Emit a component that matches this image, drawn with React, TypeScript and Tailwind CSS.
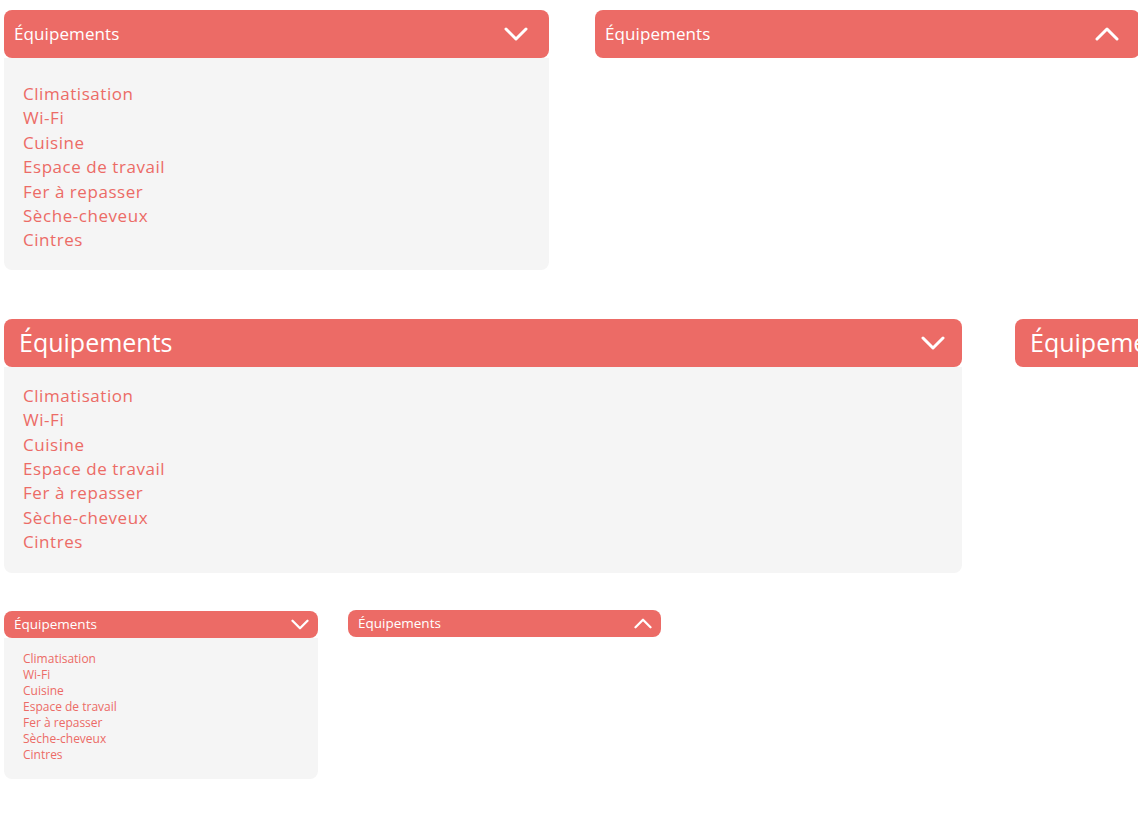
const items = [
  "Climatisation",
  "Wi-Fi",
  "Cuisine",
  "Espace de travail",
  "Fer à repasser",
  "Sèche-cheveux",
  "Cintres",
];

type Size = "md" | "lg" | "sm";

const Chevron = ({ up, small }: { up?: boolean; small?: boolean }) => (
  <svg
    width={small ? 18 : 24}
    height={small ? 11 : 14}
    viewBox="0 0 24 14"
    fill="none"
    stroke="white"
    strokeWidth={3}
    strokeLinecap="round"
    strokeLinejoin="round"
  >
    {up ? <polyline points="2,12 12,2 22,12" /> : <polyline points="2,2 12,12 22,2" />}
  </svg>
);

const Collapse = ({
  size,
  open,
  width,
}: {
  size: Size;
  open: boolean;
  width: string;
}) => {
  const header =
    size === "lg"
      ? "h-[48px] pl-[15px] pr-[17px] text-[25px]"
      : size === "md"
        ? "h-[48px] pl-[10px] pr-[21px] text-[17px] tracking-[0.1px]"
        : "h-[27px] pl-[10px] pr-[9px] text-[13.5px]";
  const body =
    size === "sm"
      ? "pb-[16px] pt-[13px] pl-[19px] text-[12px] leading-[16px]"
      : `${size === "lg" ? "pt-[17px] pb-[18px]" : "pt-[24px] pb-[17px]"} pl-[19px] text-[17px] leading-[24.4px] tracking-[0.55px]`;

  return (
    <div className={`${width} shrink-0`}>
      <div
        className={`flex items-center justify-between rounded-[8px] bg-[#ec6b66] text-white ${header}`}
      >
        <span>Équipements</span>
        <Chevron up={!open} small={size === "sm"} />
      </div>
      {open && (
        <ul className={`rounded-b-[8px] bg-[#f5f5f5] text-[#ec6b66] ${body}`}>
          {items.map((it) => (
            <li key={it}>{it}</li>
          ))}
        </ul>
      )}
    </div>
  );
};

export default function App() {
  return (
    <div
      className="w-[1138px] h-[832px] overflow-hidden bg-white pl-[4px]"
      style={{ fontFamily: '"Open Sans", "Noto Sans", sans-serif' }}
    >
      <div className="flex items-start gap-[46px] pt-[10px]">
        <Collapse size="md" open width="w-[545px]" />
        <Collapse size="md" open={false} width="w-[545px]" />
      </div>
      <div className="flex items-start gap-[53px] pt-[49px]">
        <Collapse size="lg" open width="w-[958px]" />
        <Collapse size="lg" open={false} width="w-[958px]" />
      </div>
      <div className="flex items-start gap-[30px] pt-[38px]">
        <Collapse size="sm" open width="w-[314px]" />
        <div className="-mt-[1px]">
          <Collapse size="sm" open={false} width="w-[313px]" />
        </div>
      </div>
    </div>
  );
}
